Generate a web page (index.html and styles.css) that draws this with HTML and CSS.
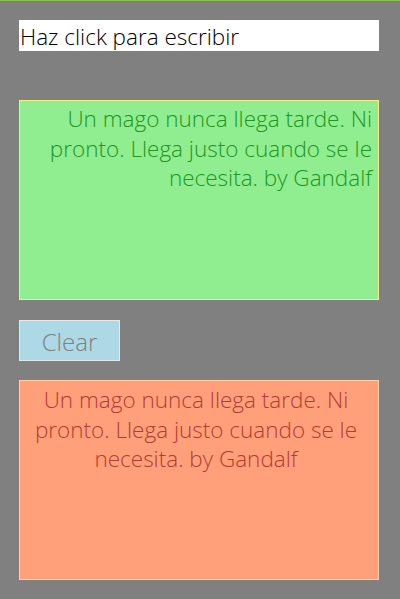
FILE: index.html
```html
<!DOCTYPE html>
<html lang="es">
<head>
<meta charset="utf-8">
<link rel="stylesheet" href="styles.css">
</head>
<body>
<div class="app">
  <div class="textbox">Haz click para escribir</div>
  <div class="panel panel-green">Un mago nunca llega tarde. Ni pronto. Llega justo cuando se le necesita. by Gandalf</div>
  <div class="button-row"><button class="clear">Clear</button></div>
  <div class="panel panel-orange">Un mago nunca llega tarde. Ni pronto. Llega justo cuando se le necesita. by Gandalf</div>
</div>
</body>
</html>
```
FILE: styles.css
```css
html, body {
  margin: 0;
  padding: 0;
}
body {
  background: #808080;
  width: 400px;
  height: 599px;
  overflow: hidden;
  font-family: "Open Sans", "Noto Sans", sans-serif;
  font-weight: 300;
}
.app {
  border-top: 1px solid #8bc34a;
  padding: 19px 21px 0 19px;
  display: flex;
  flex-direction: column;
}
.textbox {
  box-sizing: border-box;
  height: 31px;
  background: #ffffff;
  color: #000;
  font-size: 22.5px;
  line-height: 28px;
  padding: 3px 0 0 1px;
  white-space: nowrap;
}
.panel {
  box-sizing: border-box;
  height: 200px;
  font-size: 22.5px;
  line-height: 29.5px;
}
.panel-green {
  margin-top: 49px;
  background: #90ee90;
  border: 1px solid #f0f080;
  color: #229622;
  text-align: right;
  padding: 3px 6px 0 20px;
}
.button-row {
  margin-top: 20px;
  display: flex;
}
.clear {
  box-sizing: border-box;
  width: 101px;
  height: 41px;
  background: #add8e6;
  border: 1px solid #e8e8e8;
  color: #808080;
  font-family: inherit;
  font-weight: 300;
  font-size: 24px;
  line-height: 30px;
  padding: 3px 0 0 0;
}
.panel-orange {
  margin-top: 19px;
  background: #ffa07a;
  border: 1px solid #ffd0a8;
  color: #b33c32;
  text-align: center;
  padding: 4px 10px 0 4px;
}
```
